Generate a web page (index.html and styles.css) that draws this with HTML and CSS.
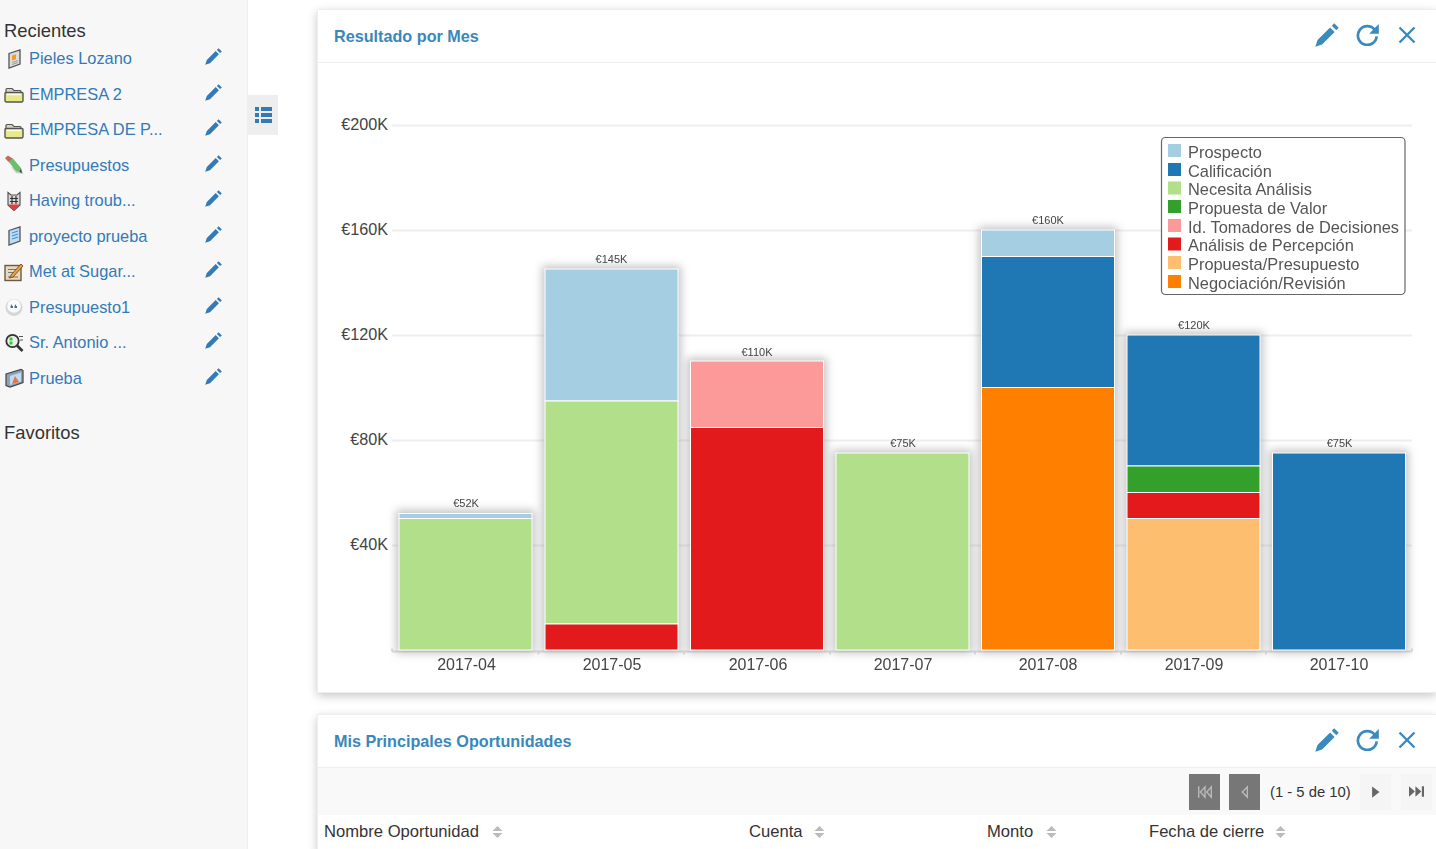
FILE: index.html
```html
<!DOCTYPE html>
<html lang="es">
<head>
    <meta charset="UTF-8">
    <title>Inicio</title>
    <link rel="stylesheet" href="styles.css">
</head>
<body>
    <svg class="defs" width="0" height="0">
        <symbol id="pencil" viewBox="0 0 17 17">
            <path d="M13.6 .2l3.200 3.200-1.700 1.700-3.200-3.200zM10.700 3.100l3.200 3.200-8.900 8.900-4.800 1.600 1.600-4.800z"/>
        </symbol>
        <symbol id="refresh" viewBox="0 0 22 22">
            <path class="arc" d="M18 6.500A9 9 0 1 0 19.800 12.800"/>
            <path d="M21.800 1v9.200h-9.200z"/>
        </symbol>
        <symbol id="close" viewBox="0 0 18 18">
            <path class="cross" d="M1.500 1.500l15 15M16.500 1.500l-15 15"/>
        </symbol>
        <symbol id="sort" viewBox="0 0 11 12">
            <path d="M5.500 0l5 5h-10zM.5 7h10l-5 5z"/>
        </symbol>
        <symbol id="folder" viewBox="0 0 20 20">
            <path d="M2 9V5.500q0-1 1-1h5l2 2h6q1 0 1 1V10z" fill="#d8d5c0" stroke="#555" stroke-width="1.200"/>
            <path d="M1 9.500q0-1 1-1h16q1 0 1 1v7q0 1.500-1.500 1.500h-15Q1 18 1 16.500z" fill="#e6e88a" stroke="#555" stroke-width="1.400"/>
            <path d="M3 10.500h14" stroke="#fbfcd8" stroke-width="1.500"/>
        </symbol>
    </svg>

    <div class="sidebar">
        <h4>Recientes</h4>
        <ul class="recent">
            <li>
                <svg class="mod" viewBox="0 0 20 20"><path d="M5 4.500l11-3.500v14l-11 4z" fill="#ddd" stroke="#555" stroke-width="1.300"/><path d="M8 6.500l4-1.200v5l-4 1.200z" fill="#f59a1b"/><path d="M8 13.500l6-2M8 15.500l6-2" stroke="#999"/></svg>
                <a href="#">Pieles Lozano</a>
                <svg class="edit"><use href="#pencil"/></svg>
            </li>
            <li>
                <svg class="mod"><use href="#folder"/></svg>
                <a href="#">EMPRESA 2</a>
                <svg class="edit"><use href="#pencil"/></svg>
            </li>
            <li>
                <svg class="mod"><use href="#folder"/></svg>
                <a href="#">EMPRESA DE P...</a>
                <svg class="edit"><use href="#pencil"/></svg>
            </li>
            <li>
                <svg class="mod" viewBox="0 0 20 20"><path d="M7 12l5 6 7.500 1-3-6z" fill="#ccc"/><path d="M4.500 6.500l4-3.500 8.500 10-1.500 4-3.500-1z" fill="#6cc06a"/><path d="M1 3l3-2.500 4.500 3-4 3.500z" fill="#c9655a"/><path d="M15.500 17l1.500-4 1 5z" fill="#444"/></svg>
                <a href="#">Presupuestos</a>
                <svg class="edit"><use href="#pencil"/></svg>
            </li>
            <li>
                <svg class="mod" viewBox="0 0 20 20"><path d="M4 1.500l3 2.500h6l3-2.500v12.500l-6 5.500-6-5.500z" fill="#d9d9d9" stroke="#555" stroke-width="1.200"/><path d="M4.500 13.500h11v.5l-5.500 5-5.500-5z" fill="#e83a3a"/><path d="M8 5v8M12 5v8M6 7.500h8M6 10.500h8" stroke="#333" stroke-width="1.200" fill="none"/></svg>
                <a href="#">Having troub...</a>
                <svg class="edit"><use href="#pencil"/></svg>
            </li>
            <li>
                <svg class="mod" viewBox="0 0 20 20"><path d="M5 4.500l11-3.500v14l-11 4z" fill="#bcdcf5" stroke="#555" stroke-width="1.300"/><path d="M8 7l6-2M8 10l6-2M8 13l6-2" stroke="#4a90d9" stroke-width="1.300"/></svg>
                <a href="#">proyecto prueba</a>
                <svg class="edit"><use href="#pencil"/></svg>
            </li>
            <li>
                <svg class="mod" viewBox="0 0 20 20"><rect x="1" y="3.500" width="16" height="15" fill="#e6d9bd" stroke="#6b5a45" stroke-width="1.400"/><path d="M4 7.500h8M4 10.500h6M4 15h10" stroke="#777"/><path d="M7 13l10-11 2 2-10 11-3.500 1z" fill="#e8a33d" stroke="#6b3a20" stroke-width=".8"/></svg>
                <a href="#">Met at Sugar...</a>
                <svg class="edit"><use href="#pencil"/></svg>
            </li>
            <li>
                <svg class="mod" viewBox="0 0 20 20"><circle cx="10" cy="10.500" r="8.500" fill="#d6d6d6"/><circle cx="10" cy="9" r="6.800" fill="#fbfbfb"/><path d="M6.500 11V9l1.500-2v2h1v2zM10.500 11V9l1.500-2v2h1v2z" fill="#4a6f96"/></svg>
                <a href="#">Presupuesto1</a>
                <svg class="edit"><use href="#pencil"/></svg>
            </li>
            <li>
                <svg class="mod" viewBox="0 0 20 20"><circle cx="8.500" cy="8" r="6.200" fill="#eee" stroke="#333" stroke-width="1.800"/><rect x="5.500" y="4.500" width="3" height="3" fill="#3c3"/><rect x="5.500" y="8.500" width="3" height="3" fill="#3c3"/><path d="M13 12.500l5.500 5.500" stroke="#333" stroke-width="2.600"/><path d="M15 3.500h4M16 7h3" stroke="#555"/></svg>
                <a href="#">Sr. Antonio ...</a>
                <svg class="edit"><use href="#pencil"/></svg>
            </li>
            <li>
                <svg class="mod" viewBox="0 0 20 20"><path d="M2 6l15-4.500 2 1v12l-13 4.500-4-1.500z" fill="#8fa2b5" stroke="#444" stroke-width="1.200"/><path d="M6 8l11-3.500v9l-11 3.500z" fill="#bcdcf5"/><path d="M11 8l4 6-7 2z" fill="#e8743b"/></svg>
                <a href="#">Prueba</a>
                <svg class="edit"><use href="#pencil"/></svg>
            </li>
        </ul>
        <h4 class="fav">Favoritos</h4>
    </div>

    <div class="toggle-col">
        <button class="toggle">
            <svg viewBox="0 0 17 16" width="17" height="16"><path d="M0 0h4v4H0zM6 0h11v4H6zM0 6h4v4H0zM6 6h11v4H6zM0 12h4v4H0zM6 12h11v4H6z"/></svg>
        </button>
    </div>

    <div class="main">
        <div class="panel chart-panel">
            <div class="panel-head">
                <span class="panel-title">Resultado por Mes</span>
                <span class="tools">
                    <svg class="tool-edit"><use href="#pencil"/></svg>
                    <svg class="tool-refresh"><use href="#refresh"/></svg>
                    <svg class="tool-close"><use href="#close"/></svg>
                </span>
            </div>
            <svg class="chart" viewBox="318 63 1118 630" width="1118" height="630">
                <defs>
                    <filter id="soft" x="-10%" y="-10%" width="120%" height="120%">
                        <feGaussianBlur stdDeviation="4"/>
                    </filter>
                </defs>
                <g class="grid">
                    <path d="M392 125.500H1412M392 230.500H1412M392 335.500H1412M392 440.500H1412M392 545.500H1412"/>
                </g>
                <path class="axis" d="M392 651.500H1412M392 651.500v-3M538.500 651.500v3M684 651.500v3M830 651.500v3M975 651.500v3M1121 651.500v3M1266 651.500v3M1412 651.500v-3"/>
                <g class="y-labels">
                    <text x="388" y="130">€200K</text>
                    <text x="388" y="235">€160K</text>
                    <text x="388" y="340">€120K</text>
                    <text x="388" y="445">€80K</text>
                    <text x="388" y="550">€40K</text>
                </g>
                <g class="shadows" filter="url(#soft)">
                    <rect x="396" y="510" width="139" height="143"/>
                    <rect x="542" y="266" width="139" height="387"/>
                    <rect x="687.500" y="358" width="139" height="295"/>
                    <rect x="833" y="450" width="139" height="203"/>
                    <rect x="978.500" y="227" width="139" height="426"/>
                    <rect x="1124" y="332" width="139" height="321"/>
                    <rect x="1269.500" y="450" width="139" height="203"/>
                </g>
                <g class="bars">
                    <rect x="399" y="513.500" width="133" height="5" fill="#a6cee3"/>
                    <rect x="399" y="518.500" width="133" height="131.500" fill="#b2df8a"/>

                    <rect x="545" y="269" width="133" height="132" fill="#a6cee3"/>
                    <rect x="545" y="401" width="133" height="223" fill="#b2df8a"/>
                    <rect x="545" y="624" width="133" height="26" fill="#e31a1c"/>

                    <rect x="690.500" y="361" width="133" height="66.500" fill="#fb9a99"/>
                    <rect x="690.500" y="427.500" width="133" height="222.500" fill="#e31a1c"/>

                    <rect x="836" y="453" width="133" height="197" fill="#b2df8a"/>

                    <rect x="981.500" y="230" width="133" height="26.500" fill="#a6cee3"/>
                    <rect x="981.500" y="256.500" width="133" height="131" fill="#1f78b4"/>
                    <rect x="981.500" y="387.500" width="133" height="262.500" fill="#ff7f00"/>

                    <rect x="1127" y="335" width="133" height="131" fill="#1f78b4"/>
                    <rect x="1127" y="466" width="133" height="26.500" fill="#33a02c"/>
                    <rect x="1127" y="492.500" width="133" height="26" fill="#e31a1c"/>
                    <rect x="1127" y="518.500" width="133" height="131.500" fill="#fdbf6f"/>

                    <rect x="1272.500" y="453" width="133" height="197" fill="#1f78b4"/>
                </g>
                <g class="totals">
                    <text x="466" y="507">€52K</text>
                    <text x="611.500" y="263">€145K</text>
                    <text x="757" y="356">€110K</text>
                    <text x="903" y="447">€75K</text>
                    <text x="1048" y="224">€160K</text>
                    <text x="1194" y="329">€120K</text>
                    <text x="1339.500" y="447">€75K</text>
                </g>
                <g class="x-labels">
                    <text x="466.500" y="670">2017-04</text>
                    <text x="612" y="670">2017-05</text>
                    <text x="758" y="670">2017-06</text>
                    <text x="903" y="670">2017-07</text>
                    <text x="1048" y="670">2017-08</text>
                    <text x="1194" y="670">2017-09</text>
                    <text x="1339" y="670">2017-10</text>
                </g>
                <g class="legend">
                    <rect class="legend-box" x="1161.500" y="137.500" width="243.500" height="157" rx="4"/>
                    <rect x="1168" y="144" width="13" height="13" fill="#a6cee3"/>
                    <rect x="1168" y="163" width="13" height="13" fill="#1f78b4"/>
                    <rect x="1168" y="181.500" width="13" height="13" fill="#b2df8a"/>
                    <rect x="1168" y="200" width="13" height="13" fill="#33a02c"/>
                    <rect x="1168" y="219" width="13" height="13" fill="#fb9a99"/>
                    <rect x="1168" y="237.500" width="13" height="13" fill="#e31a1c"/>
                    <rect x="1168" y="256" width="13" height="13" fill="#fdbf6f"/>
                    <rect x="1168" y="275" width="13" height="13" fill="#ff7f00"/>
                    <text x="1188" y="158">Prospecto</text>
                    <text x="1188" y="176.500">Calificación</text>
                    <text x="1188" y="195">Necesita Análisis</text>
                    <text x="1188" y="214">Propuesta de Valor</text>
                    <text x="1188" y="232.500">Id. Tomadores de Decisiones</text>
                    <text x="1188" y="251">Análisis de Percepción</text>
                    <text x="1188" y="270">Propuesta/Presupuesto</text>
                    <text x="1188" y="289">Negociación/Revisión</text>
                </g>
            </svg>
        </div>

        <div class="panel table-panel">
            <div class="panel-head">
                <span class="panel-title">Mis Principales Oportunidades</span>
                <span class="tools">
                    <svg class="tool-edit"><use href="#pencil"/></svg>
                    <svg class="tool-refresh"><use href="#refresh"/></svg>
                    <svg class="tool-close"><use href="#close"/></svg>
                </span>
            </div>
            <div class="pager">
                <span class="pg off"><svg viewBox="0 0 14 12" width="16" height="14"><path class="hollow" d="M1.500 1v10M7 1.500L3 6l4 4.500zM12.500 1.500L8.500 6l4 4.500z"/></svg></span>
                <span class="pg off"><svg viewBox="0 0 8 12" width="9" height="14"><path class="hollow" d="M6.500 1.500L2 6l4.500 4.500z"/></svg></span>
                <span class="pg-count">(1 - 5 de 10)</span>
                <span class="pg"><svg viewBox="0 0 8 12" width="9" height="14"><path d="M1 1l6.500 5L1 11z"/></svg></span>
                <span class="pg pg-last"><svg viewBox="0 0 14 12" width="15" height="13"><path d="M0 1l5.500 5L0 11zM6 1l5.500 5L6 11zM12 1h2v10h-2z"/></svg></span>
            </div>
            <div class="cols">
                <span class="col col-name">Nombre Oportunidad<svg class="sort"><use href="#sort"/></svg></span>
                <span class="col col-account">Cuenta<svg class="sort"><use href="#sort"/></svg></span>
                <span class="col col-amount">Monto<svg class="sort"><use href="#sort"/></svg></span>
                <span class="col col-date">Fecha de cierre<svg class="sort"><use href="#sort"/></svg></span>
            </div>
        </div>
    </div>
</body>
</html>
```

FILE: styles.css
```css
html, body{
    margin: 0;
    padding: 0;
    height: 849px;
    overflow: hidden;
    background: #fff;
}

body{
    display: flex;
    font-family: "Liberation Sans", Arial, sans-serif;
    color: #333;
}

.defs{
    position: absolute;
}

/* left column */
.sidebar{
    width: 248px;
    height: 849px;
    flex: none;
    box-sizing: border-box;
    background: #f7f7f7;
    border-right: 1px solid #eee;
    padding: 21px 0 0 4px;
}

.sidebar h4{
    margin: 0;
    font-size: 18.400px;
    font-weight: normal;
    line-height: 20.200px;
}

.sidebar .fav{
    margin-top: 27px;
}

.recent{
    list-style: none;
    margin: 0;
    padding: 0;
}

.recent li{
    height: 35.500px;
    display: flex;
    align-items: center;
}

.mod{
    width: 20px;
    height: 20px;
    flex: none;
    margin-right: 5px;
}

.recent a{
    flex: 1;
    font-size: 16.400px;
    color: #337ab7;
    text-decoration: none;
}

.edit{
    width: 17px;
    height: 17px;
    flex: none;
    margin-right: 25px;
    fill: #337ab7;
    position: relative;
    top: -2px;
}

.toggle-col{
    width: 31px;
    flex: none;
    padding-top: 95px;
}

.toggle{
    display: flex;
    align-items: center;
    justify-content: center;
    width: 30px;
    height: 40px;
    padding: 0;
    border: none;
    background: #eee;
}

.toggle svg{
    fill: #337ab7;
}

/* panels */
.main{
    flex: 1;
    min-width: 0;
    padding: 9px 0 0 38px;
}

.panel{
    background: #fff;
    border: 1px solid #eee;
    border-right: none;
    box-shadow: 0 3px 9px rgba(0, 0, 0, .22);
}

.chart-panel{
    height: 682px;
    margin-bottom: 21px;
}

.panel-head{
    height: 52px;
    display: flex;
    align-items: center;
    justify-content: space-between;
    border-bottom: 1px solid #eee;
    padding: 0 20px 0 16px;
}

.panel-title{
    font-size: 16.200px;
    font-weight: bold;
    color: #3a87ba;
}

.tools{
    display: flex;
    align-items: center;
    padding-bottom: 3px;
}

.tools svg{
    fill: #3a8bbd;
}

.tool-edit{
    width: 24px;
    height: 24px;
    margin-right: 17px;
}

.tool-refresh{
    width: 23px;
    height: 23px;
    margin-right: 19px;
}

.tool-close{
    width: 18px;
    height: 18px;
}

#refresh .arc{
    fill: none;
    stroke: #3a8bbd;
    stroke-width: 2.600;
}

#close .cross{
    fill: none;
    stroke: #3a8bbd;
    stroke-width: 2.400;
}

/* chart */
.chart{
    display: block;
    font-family: "Liberation Sans", Arial, sans-serif;
}

.grid path{
    fill: none;
    stroke: #eee;
    stroke-width: 2;
}

.axis{
    fill: none;
    stroke: #ddd;
    stroke-width: 2;
}

.y-labels text{
    text-anchor: end;
    font-size: 16.200px;
    fill: #444;
}

.x-labels text{
    text-anchor: middle;
    font-size: 16px;
    fill: #444;
}

.totals text{
    text-anchor: middle;
    font-size: 11px;
    fill: #444;
}

.shadows rect{
    fill: #888;
    opacity: .5;
}

.bars rect{
    stroke: #fff;
    stroke-width: 1;
}

.legend-box{
    fill: #fff;
    stroke: #666;
    stroke-width: 1.200;
}

.legend text{
    font-size: 16.400px;
    fill: #555;
}

/* table panel */
.pager{
    height: 47px;
    display: flex;
    align-items: center;
    justify-content: flex-end;
    gap: 9px;
    padding-right: 4px;
    background: #f9f9f9;
}

.pg{
    width: 31px;
    height: 36px;
    display: flex;
    align-items: center;
    justify-content: center;
    background: #f5f5f5;
}

.pg svg{
    fill: #666;
}

.pg.off{
    background: #777;
}

.pg-last{
    margin-left: 1px;
}

.pg .hollow{
    fill: none;
    stroke: #bbb;
    stroke-width: 1.200;
}

.pg-count{
    width: 81px;
    margin-left: 1px;
    font-size: 14.800px;
    white-space: nowrap;
    color: #333;
}

.cols{
    height: 34px;
    display: flex;
    align-items: center;
    border-bottom: 1px solid #ccc;
    font-size: 16.600px;
    padding-left: 6px;
}

.col{
    display: flex;
    align-items: center;
}

.col-name{
    width: 425px;
}

.col-account{
    width: 238px;
}

.col-amount{
    width: 162px;
}

.sort{
    width: 11px;
    height: 12px;
    margin-left: 11px;
    fill: #bbb;
}

.col-name .sort, .col-amount .sort{
    margin-left: 13px;
}
```
